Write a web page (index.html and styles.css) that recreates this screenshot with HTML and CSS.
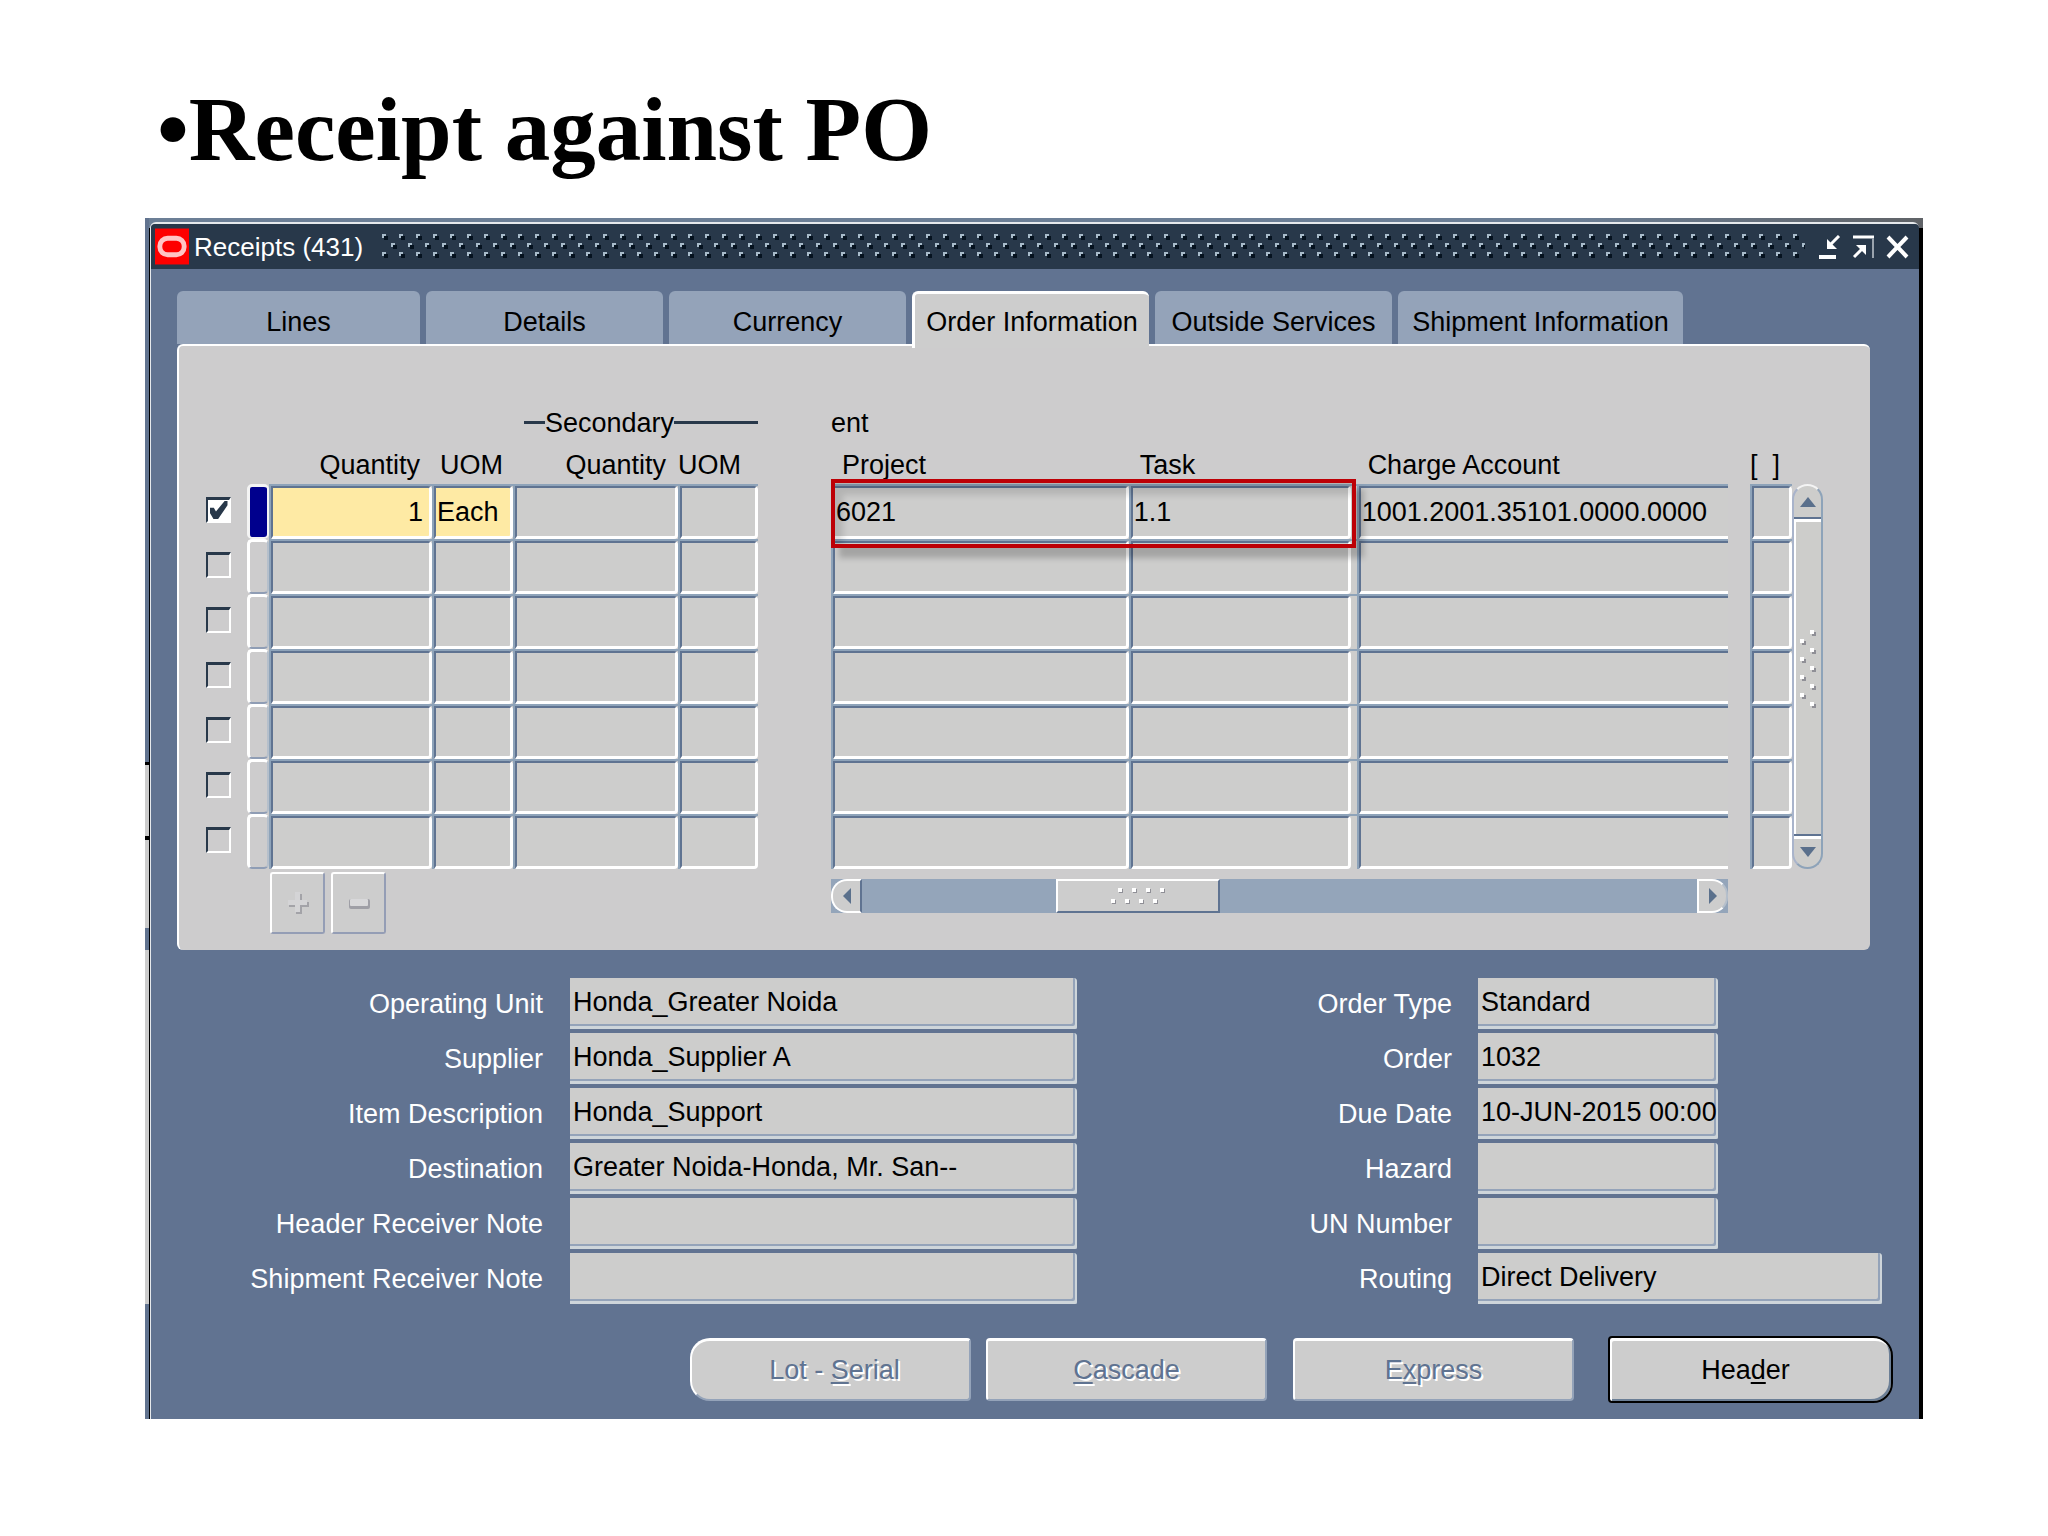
FILE: index.html
```
<!DOCTYPE html>
<html lang="en">
<head>
<meta charset="utf-8">
<title>Receipt against PO</title>
<link rel="stylesheet" href="styles.css">
</head>
<body>
<h1 class="slide-title">•Receipt against PO</h1>
<main class="desktop">
<section class="window">
  <header class="titlebar">
    <svg class="logo" viewBox="0 0 35 37" aria-hidden="true"><rect width="35" height="37" fill="#fe0000"/><rect x="5" y="10" width="25" height="17" rx="8" fill="none" stroke="#ffc4c4" stroke-width="5"/></svg>
    <h2 class="window-name">Receipts (431)</h2>
    <svg class="grip" aria-hidden="true"><defs><pattern id="dots" width="17" height="28" patternUnits="userSpaceOnUse"><g fill="#05121f"><path d="M2 3h4v4H2zM11 12h4v4h-4zM2 21h4v4H2z"/></g><g fill="#a9bccb"><path d="M0 1h4v2H2v2H0zM9 10h4v2h-2v2H9zM0 19h4v2H2v2H0z"/></g></pattern></defs><rect width="100%" height="28" fill="url(#dots)"/></svg>
    <div class="window-controls">
      <button type="button" aria-label="Minimize"><svg viewBox="0 0 23 24"><path d="M1 22h17" stroke="#fff" stroke-width="4"/><path d="M21 1l-9 9" stroke="#fff" stroke-width="3"/><path d="M9 4v10h10z" fill="#fff"/></svg></button>
      <button type="button" aria-label="Maximize"><svg viewBox="0 0 23 24"><path d="M1 2h21" stroke="#fff" stroke-width="3"/><path d="M21 3v20" stroke="#9aa3ad" stroke-width="2"/><path d="M2 22l9-9" stroke="#fff" stroke-width="3"/><path d="M4 10h10v10z" fill="#fff"/></svg></button>
      <button type="button" aria-label="Close"><svg viewBox="0 0 23 24"><path d="M2 2l19 20M21 2L2 22" stroke="#fff" stroke-width="4"/></svg></button>
    </div>
  </header>
  <div class="content">
    <nav class="tabs" role="tablist">
      <button type="button" role="tab" class="tab tab-first">Lines</button>
      <button type="button" role="tab" class="tab">Details</button>
      <button type="button" role="tab" class="tab">Currency</button>
      <button type="button" role="tab" class="tab active" aria-selected="true">Order Information</button>
      <button type="button" role="tab" class="tab">Outside Services</button>
      <button type="button" role="tab" class="tab tab-wide">Shipment Information</button>
    </nav>
    <div class="panel">
      <div class="block block-left">
        <table class="grid">
          <colgroup><col class="c-check"><col class="c-mark"><col class="c-qty"><col class="c-uom"><col class="c-qty2"><col class="c-uom2"></colgroup>
          <thead>
            <tr class="head-group"><td colspan="4"></td><th colspan="2"><span class="group-label">Secondary</span></th></tr>
            <tr class="head"><td></td><td></td><th class="num">Quantity</th><th class="mid">UOM</th><th class="num">Quantity</th><th>UOM</th></tr>
          </thead>
          <tbody>
            <tr><td class="plain"><input type="checkbox" aria-label="Select line 1" checked></td><td class="mark current"></td><td><input class="required num" value="1" aria-label="Quantity"></td><td><input class="required" value="Each" aria-label="UOM"></td><td><input aria-label="Secondary quantity"></td><td><input aria-label="Secondary UOM"></td></tr>
            <tr><td class="plain"><input type="checkbox" aria-label="Select line 2"></td><td class="mark"></td><td><input aria-label="Quantity"></td><td><input aria-label="UOM"></td><td><input aria-label="Secondary quantity"></td><td><input aria-label="Secondary UOM"></td></tr>
            <tr><td class="plain"><input type="checkbox" aria-label="Select line 3"></td><td class="mark"></td><td><input aria-label="Quantity"></td><td><input aria-label="UOM"></td><td><input aria-label="Secondary quantity"></td><td><input aria-label="Secondary UOM"></td></tr>
            <tr><td class="plain"><input type="checkbox" aria-label="Select line 4"></td><td class="mark"></td><td><input aria-label="Quantity"></td><td><input aria-label="UOM"></td><td><input aria-label="Secondary quantity"></td><td><input aria-label="Secondary UOM"></td></tr>
            <tr><td class="plain"><input type="checkbox" aria-label="Select line 5"></td><td class="mark"></td><td><input aria-label="Quantity"></td><td><input aria-label="UOM"></td><td><input aria-label="Secondary quantity"></td><td><input aria-label="Secondary UOM"></td></tr>
            <tr><td class="plain"><input type="checkbox" aria-label="Select line 6"></td><td class="mark"></td><td><input aria-label="Quantity"></td><td><input aria-label="UOM"></td><td><input aria-label="Secondary quantity"></td><td><input aria-label="Secondary UOM"></td></tr>
            <tr><td class="plain"><input type="checkbox" aria-label="Select line 7"></td><td class="mark"></td><td><input aria-label="Quantity"></td><td><input aria-label="UOM"></td><td><input aria-label="Secondary quantity"></td><td><input aria-label="Secondary UOM"></td></tr>
          </tbody>
        </table>
        <div class="row-tools">
          <button type="button" aria-label="Add line" disabled><svg viewBox="0 0 24 24"><path d="M10 3h6v8h7v5h-7v7h-6v-7H3v-5h7z" fill="#a3a3a8"/><path d="M9 1h5v8h7v5h-7v7H9v-7H2V9h7z" fill="#d4d4d6"/></svg></button>
          <button type="button" aria-label="Remove line" disabled><svg viewBox="0 0 24 24"><rect x="2" y="8" width="21" height="10" rx="2" fill="#9f9fa6"/><rect x="3" y="8" width="18" height="7" rx="1" fill="#d8d8da"/></svg></button>
        </div>
      </div>
      <div class="block block-main">
        <table class="grid">
          <colgroup><col class="c-project"><col class="c-task"><col></colgroup>
          <thead>
            <tr class="head-group"><th colspan="3">ent</th></tr>
            <tr class="head"><th class="inset">Project</th><th class="inset">Task</th><th class="inset">Charge Account</th></tr>
          </thead>
          <tbody>
            <tr><td><input value="6021" aria-label="Project"></td><td class="gap"><input value="1.1" aria-label="Task"></td><td class="open"><input value="1001.2001.35101.0000.0000" aria-label="Charge Account"></td></tr>
            <tr><td><input aria-label="Project"></td><td class="gap"><input aria-label="Task"></td><td class="open"><input aria-label="Charge Account"></td></tr>
            <tr><td><input aria-label="Project"></td><td class="gap"><input aria-label="Task"></td><td class="open"><input aria-label="Charge Account"></td></tr>
            <tr><td><input aria-label="Project"></td><td class="gap"><input aria-label="Task"></td><td class="open"><input aria-label="Charge Account"></td></tr>
            <tr><td><input aria-label="Project"></td><td class="gap"><input aria-label="Task"></td><td class="open"><input aria-label="Charge Account"></td></tr>
            <tr><td><input aria-label="Project"></td><td class="gap"><input aria-label="Task"></td><td class="open"><input aria-label="Charge Account"></td></tr>
            <tr><td><input aria-label="Project"></td><td class="gap"><input aria-label="Task"></td><td class="open"><input aria-label="Charge Account"></td></tr>
          </tbody>
        </table>
        <div class="callout"></div>
        <div class="hscroll">
          <button type="button" class="h-left" aria-label="Scroll left"><svg viewBox="0 0 10 18"><path d="M9 1v16L1 9z" fill="#5a708c"/></svg></button>
          <div class="h-thumb"><svg viewBox="0 0 60 22" aria-hidden="true"><g fill="#8f8f96"><path d="M11 4h4v4h-4zM25 4h4v4h-4zM39 4h4v4h-4zM53 4h4v4h-4zM4 15h4v4H4zM18 15h4v4h-4zM32 15h4v4h-4zM46 15h4v4h-4z"/></g><g fill="#fff"><path d="M10 3h4v4h-4zM24 3h4v4h-4zM38 3h4v4h-4zM52 3h4v4h-4zM3 14h4v4H3zM17 14h4v4h-4zM31 14h4v4h-4zM45 14h4v4h-4z"/></g></svg></div>
          <button type="button" class="h-right" aria-label="Scroll right"><svg viewBox="0 0 10 18"><path d="M1 1v16l8-8z" fill="#5a708c"/></svg></button>
        </div>
      </div>
      <div class="block block-flex">
        <table class="grid">
          <thead><tr class="head-group"><td></td></tr><tr class="head"><th>[&nbsp;&nbsp;]</th></tr></thead>
          <tbody>
            <tr><td><input aria-label="Flexfield"></td></tr>
            <tr><td><input aria-label="Flexfield"></td></tr>
            <tr><td><input aria-label="Flexfield"></td></tr>
            <tr><td><input aria-label="Flexfield"></td></tr>
            <tr><td><input aria-label="Flexfield"></td></tr>
            <tr><td><input aria-label="Flexfield"></td></tr>
            <tr><td><input aria-label="Flexfield"></td></tr>
          </tbody>
        </table>
      </div>
      <div class="vscroll">
        <button type="button" class="v-up" aria-label="Scroll up"><svg viewBox="0 0 16 10"><path d="M8 0l8 10H0z" fill="#5a708c"/></svg></button>
        <div class="v-thumb"><svg viewBox="0 0 20 84" aria-hidden="true"><g fill="#8f8f96"><path d="M14 4h4v4h-4zM4 13h4v4H4zM14 22h4v4h-4zM4 31h4v4H4zM14 40h4v4h-4zM4 49h4v4H4zM14 58h4v4h-4zM4 67h4v4H4zM14 76h4v4h-4z"/></g><g fill="#fff"><path d="M12 2h4v4h-4zM2 11h4v4H2zM12 20h4v4h-4zM2 29h4v4H2zM12 38h4v4h-4zM2 47h4v4H2zM12 56h4v4h-4zM2 65h4v4H2zM12 74h4v4h-4z"/></g></svg></div>
        <button type="button" class="v-down" aria-label="Scroll down"><svg viewBox="0 0 16 10"><path d="M8 10l8-10H0z" fill="#5a708c"/></svg></button>
      </div>
    </div>
    <form class="details">
      <div class="fields fields-left">
        <label for="ou">Operating Unit</label><input id="ou" value="Honda_Greater Noida">
        <label for="supplier">Supplier</label><input id="supplier" value="Honda_Supplier A">
        <label for="item">Item Description</label><input id="item" value="Honda_Support">
        <label for="dest">Destination</label><input id="dest" value="Greater Noida-Honda, Mr. San--">
        <label for="hnote">Header Receiver Note</label><input id="hnote">
        <label for="snote">Shipment Receiver Note</label><input id="snote">
      </div>
      <div class="fields fields-right">
        <label for="otype">Order Type</label><input id="otype" value="Standard">
        <label for="order">Order</label><input id="order" value="1032">
        <label for="due">Due Date</label><input id="due" value="10-JUN-2015 00:00">
        <label for="hazard">Hazard</label><input id="hazard">
        <label for="un">UN Number</label><input id="un">
        <label for="routing">Routing</label><input id="routing" class="long" value="Direct Delivery">
      </div>
    </form>
    <footer class="actions">
      <div class="pair">
        <button type="button" class="action round-left" disabled>Lot - <u>S</u>erial</button>
        <button type="button" class="action" disabled><u>C</u>ascade</button>
      </div>
      <button type="button" class="action" disabled>E<u>x</u>press</button>
      <button type="button" class="action default">Hea<u>d</u>er</button>
    </footer>
  </div>
</section>
</main>
</body>
</html>
```

FILE: styles.css
```
* { box-sizing: border-box; }
body {
  margin: 0;
  background: #fff;
  color: #000;
  font-family: "Liberation Sans", Arial, sans-serif;
  font-size: 27px;
  line-height: 36px;
}
button, input { font: inherit; color: inherit; margin: 0; padding: 0; border-radius: 0; }
svg { display: block; }
.slide-title {
  margin: 0;
  padding: 80px 126px 38px 157px;
  font: bold 91px/100px "Liberation Serif", serif;
}
/* A sliver of the window behind shows along the left edge. */
.desktop {
  margin: 0 125px 0 145px;
  padding: 4px 4px 0 5px;
  background:
    linear-gradient(#61738f 544px, #000 544px 547px, #ccc 547px 618px, #000 618px 622px, #ccc 622px 710px, #61738f 710px 732px, #ccc 732px 1086px, #61738f 1086px) 0 0 / 4px 100% no-repeat,
    linear-gradient(90deg, #6c7f96, #6c7f96 80%, #606367) 0 0 / 100% 10px no-repeat,
    #000;
}
.window {
  border: 1px solid #e6e9ec;
  border-width: 2px 0 0 1px;
  border-radius: 6px 6px 0 0;
  background: #617391;
}
.titlebar {
  display: flex;
  align-items: center;
  gap: 5px;
  height: 45px;
  padding: 0 10px 0 4px;
  background: #28384a;
  border-radius: 4px 4px 0 0;
}
.logo { width: 34px; height: 37px; }
.window-name { margin: 0; font-size: 26px; font-weight: normal; color: #fff; white-space: nowrap; }
.grip { flex: 1; height: 28px; min-width: 0; margin: 0 8px 0 14px; }
.window-controls { display: flex; gap: 11px; }
.window-controls button { width: 23px; height: 24px; border: 0; background: none; }
.content { padding: 22px 26px 16px 26px; }
.tabs { display: flex; gap: 6px; }
.tab {
  width: 237px;
  height: 53px;
  padding-top: 8px;
  border: 0;
  border-radius: 6px 6px 0 0;
  background: #94a3b9;
  white-space: nowrap;
}
.tab-first { width: 243px; }
.tab-wide { width: 285px; }
.tab.active {
  position: relative;
  height: 57px;
  margin-bottom: -4px;
  border: 3px solid #fff;
  border-width: 3px 0 0 3px;
  padding-top: 1px;
  background: #cdcdcd;
}
.panel {
  display: flex;
  align-items: flex-start;
  margin-right: 23px;
  padding: 54px 47px 16px 20px;
  border: 2px solid #fff;
  border-width: 2px 0 0 2px;
  border-radius: 6px;
  background: #cdcccd;
}
.grid { width: 100%; table-layout: fixed; border-collapse: separate; border-spacing: 0; }
.grid th, .grid td { padding: 0; font-weight: normal; text-align: left; white-space: nowrap; }
.head-group > * { height: 45px; vertical-align: middle; }
.head > * { height: 39px; vertical-align: middle; }
.grid th.num { text-align: right; padding-right: 12px; }
.grid th.mid { padding-left: 8px; }
.grid th.inset { padding-left: 11px; }
.grid tbody td { height: 55px; border-top: 2px solid #8ea3b9; border-left: 2px solid #8ea3b9; }
.grid td > input:not([type]) {
  display: block;
  width: 100%;
  height: 53px;
  padding: 0 2px 0 1px;
  border: solid;
  border-width: 2px 3px 3px 2px;
  border-color: #5f7391 #fff #fff #5f7391;
  border-radius: 0 4px 4px 0;
  background: #cdcdcc;
}
.grid td > input.required { background: #feeaa4; }
.grid td > input.num { text-align: right; padding-right: 6px; }
.grid td.gap { padding-right: 6px; background: linear-gradient(#cdcdcc, #cdcdcc) 100% 0 / 6px 100% no-repeat border-box; }
.grid td.open > input { border-right: 0; border-radius: 0; }
.grid tbody td.plain { border: 0; padding: 0 0 4px 7px; }
.grid tbody td.mark {
  border: solid #fff;
  border-width: 3px 2px 2px 3px;
  border-right-color: #b5bfcb;
  border-bottom-color: #8f9db5;
  border-radius: 5px;
}
.grid tbody td.mark.current { background: #00008d; border-color: #f4f4f4; }
.group-label { display: flex; align-items: center; padding-left: 11px; }
.group-label::before, .group-label::after { content: ""; height: 3px; width: 21px; background: #28384a; }
.group-label::after { flex: 1; }
.block-left { width: 559px; }
.block-main { position: relative; flex: 1; margin-left: 73px; min-width: 0; }
.block-flex { width: 42px; margin-left: 22px; }
.c-check { width: 48px; } .c-mark { width: 22px; } .c-qty { width: 163px; }
.c-uom { width: 81px; } .c-qty2 { width: 165px; } .c-uom2 { width: 80px; }
.c-project { width: 33.2%; } .c-task { width: 25.4%; }
input[type="checkbox"] {
  appearance: none;
  display: grid;
  place-items: center;
  width: 25px;
  height: 26px;
  border: solid;
  border-width: 3px 2px 2px 2px;
  border-color: #28384a #fff #fff #28384a;
}
input[type="checkbox"]:checked { background: #fff; }
input[type="checkbox"]:checked::after {
  content: "";
  width: 18px;
  height: 18px;
  background: #28384a;
  clip-path: polygon(0 38%, 24% 38%, 36% 58%, 84% 0, 100% 0, 100% 24%, 48% 100%, 22% 100%, 0 62%);
}
.callout {
  position: absolute;
  top: 79px;
  left: 0;
  width: 58.5%;
  height: 69px;
  border: 4px solid #bd0006;
  box-shadow: 8px 10px 6px rgba(0, 0, 0, .2), inset 8px 12px 6px rgba(0, 0, 0, .12);
  pointer-events: none;
}
.row-tools { display: flex; gap: 6px; padding: 3px 0 0 71px; }
.row-tools button {
  display: grid;
  place-items: center;
  width: 55px;
  height: 62px;
  border: 2px solid;
  border-color: #fff #949db5 #949db5 #fff;
  border-radius: 3px;
  background: #cdcdcd;
}
.row-tools svg { width: 24px; height: 24px; }
.hscroll { display: flex; height: 34px; margin-top: 10px; background: #94a5ba; }
.hscroll button { display: grid; place-items: center; width: 31px; height: 34px; background: #cdcdcd; border: 2px solid #fff; }
.hscroll svg { width: 10px; height: 18px; }
.hscroll .h-left { border-radius: 16px 0 0 16px; border-right-color: #5f7391; }
.hscroll .h-right { margin-left: auto; border-radius: 0 16px 16px 0; border-right-color: #b5bfcb; }
.h-thumb { display: grid; place-items: center; width: 164px; margin-left: 21.6%; border: 2px solid; border-color: #fff #5f7391 #5f7391 #fff; background: #cdcdcd; }
.hscroll .h-thumb svg { width: 60px; height: 22px; }
.vscroll {
  display: flex;
  flex-direction: column;
  width: 31px;
  height: 385px;
  margin-top: 84px;
  border: 2px solid;
  border-color: #f4f4f4 #8ea3b9 #8ea3b9 #a9b4cb;
  border-radius: 16px;
  background: #cdcdcb;
}
.vscroll button { display: grid; place-items: center; width: 27px; height: 31px; border: 0; background: none; }
.vscroll button svg { width: 16px; height: 10px; }
.v-thumb { flex: 1; display: grid; place-items: center; padding-bottom: 14px; border: solid; border-width: 2px 0; border-color: #5f7391; box-shadow: inset 0 3px #fff, inset 2px 0 #fff, 0 3px #fff; }
.v-thumb svg { width: 20px; height: 84px; }
.details { display: flex; justify-content: space-between; padding: 28px 11px 0 0; }
.fields { display: grid; row-gap: 4px; align-items: center; grid-auto-rows: 51px; }
.fields-left { grid-template-columns: 366px 507px; column-gap: 27px; }
.fields-right { grid-template-columns: 180px 404px; column-gap: 26px; }
.fields label { color: #fff; text-align: right; }
.fields input {
  width: 100%;
  height: 51px;
  padding: 0 0 3px 3px;
  border: 0;
  border-radius: 0 4px 2px 0;
  background: #cdcdcc;
  box-shadow: inset -2px -3px #ced5da, inset -4px -5px #94a3b9;
}
.fields-right input { width: 240px; }
.fields-right input.long { width: 404px; }
.actions { display: flex; justify-content: flex-end; align-items: center; gap: 26px; padding-top: 32px; }
.pair { display: flex; gap: 15px; }
.action {
  width: 281px;
  height: 63px;
  border: solid;
  border-width: 3px 2px 2px 2px;
  border-color: #fff #94a3b9 #94a3b9 #fff;
  border-radius: 4px;
  background: #cdcdcd;
}
.action:disabled { color: #5f7391; text-shadow: 2px 2px #fff; }
.action u { text-underline-offset: 3px; text-decoration-thickness: 2px; }
.action.round-left { padding-left: 8px; border-radius: 20px 4px 4px 20px; }
.action.default { width: 285px; height: 67px; margin-left: 8px; padding-right: 10px; border: 2px solid #000; border-radius: 4px 20px 20px 4px; box-shadow: inset 2px 3px #fff, inset -2px -2px #6c7f96; }
```
